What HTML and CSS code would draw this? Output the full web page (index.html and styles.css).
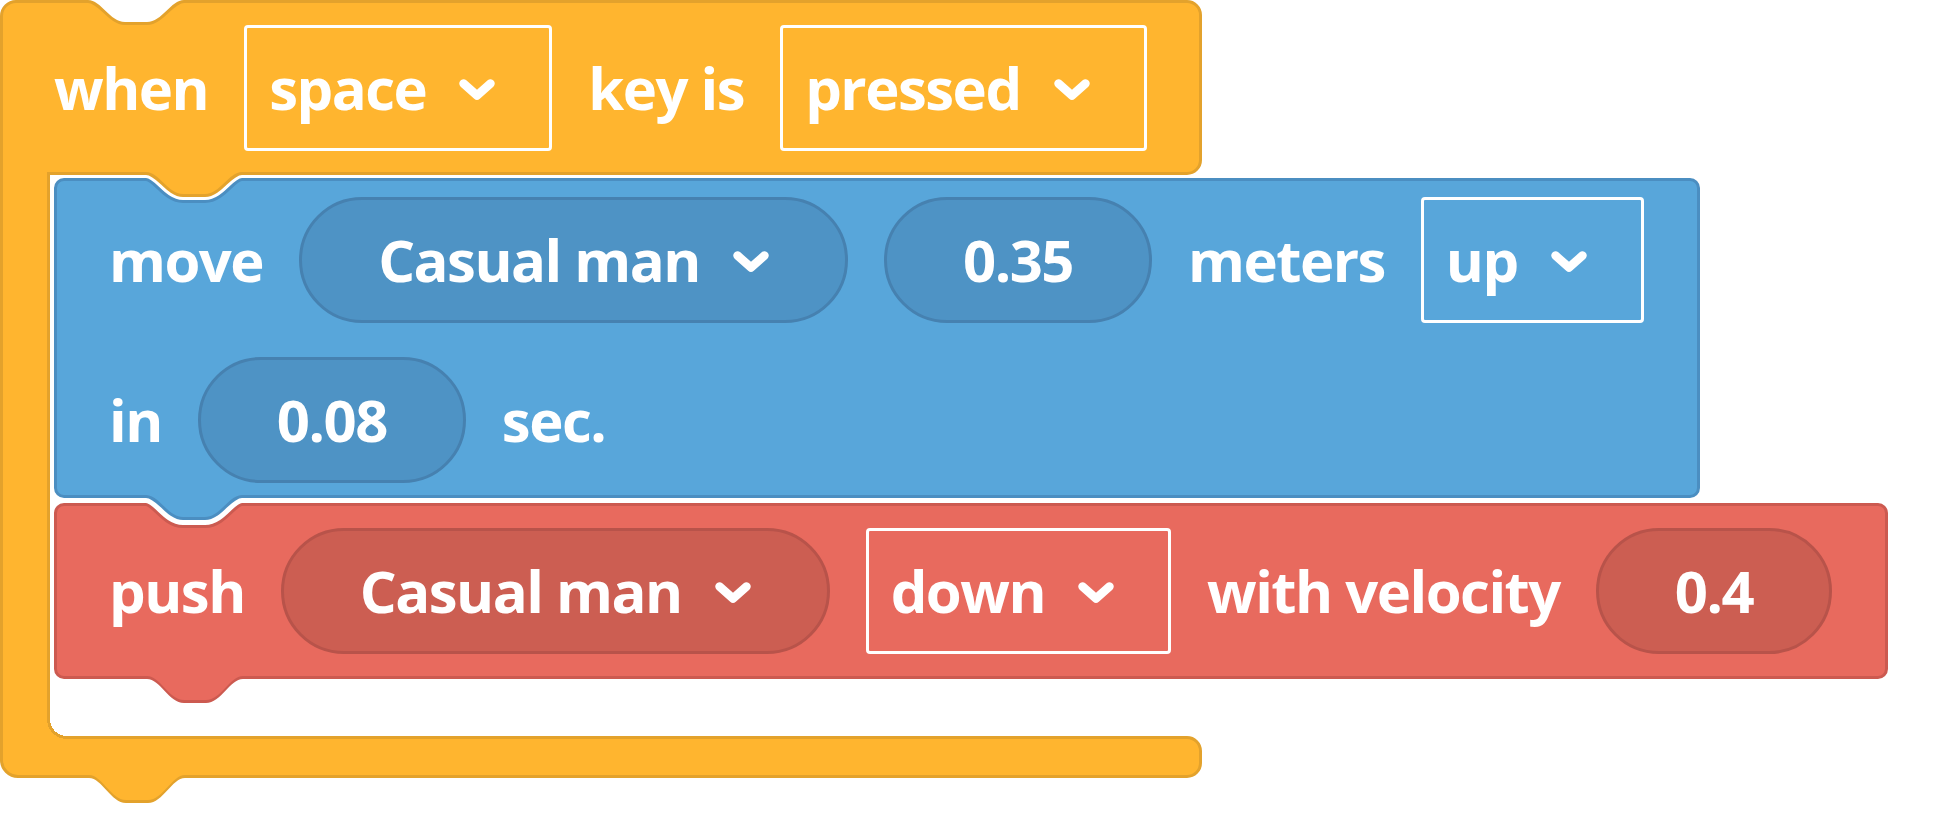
FILE: index.html
```html
<!DOCTYPE html>
<html lang="en">
<head>
    <meta charset="UTF-8">
    <title>when space key is pressed</title>
    <link rel="stylesheet" href="styles.css">
</head>
<body>
    <div class="event">
        <div class="head">
            <!-- notch cut into the top of the hat block -->
            <svg class="notch notch-head" width="120" height="34" viewBox="0 0 120 34">
                <g transform="translate(12,0)">
                    <path d="M-20 0 H0 C13 0 22 22 37 22 H59 C74 22 83 0 96 0 H116" fill="none" stroke="#e3a22c" stroke-width="6"/>
                    <path d="M-20 0 H0 C13 0 22 22 37 22 H59 C74 22 83 0 96 0 H116 V-10 H-20 Z" fill="#fff"/>
                </g>
            </svg>
            <span class="label">when</span>
            <div class="field">
                <span>space</span>
                <svg class="chevron" width="36" height="22" viewBox="0 0 36 22"><path d="M4.5 4.5 L18 16.5 L31.5 4.5"/></svg>
            </div>
            <span class="label">key is</span>
            <div class="field">
                <span>pressed</span>
                <svg class="chevron" width="36" height="22" viewBox="0 0 36 22"><path d="M4.5 4.5 L18 16.5 L31.5 4.5"/></svg>
            </div>
        </div>

        <div class="body">
            <div class="arm"></div>
            <div class="stack">
                <div class="block motion">
                    <!-- tab of the hat block sitting in this block's notch -->
                    <svg class="notch notch-motion" width="120" height="48" viewBox="0 0 120 48">
                        <g transform="translate(12,10)">
                            <path d="M-20 0 H0 C13 0 22 22 37 22 H59 C74 22 83 0 96 0 H116" fill="none" stroke="#4b8ec1" stroke-width="18"/>
                            <path d="M-20 0 H0 C13 0 22 22 37 22 H59 C74 22 83 0 96 0 H116" fill="none" stroke="#fff" stroke-width="12"/>
                            <path d="M-20 0 H0 C13 0 22 22 37 22 H59 C74 22 83 0 96 0 H116" fill="none" stroke="#e3a22c" stroke-width="6"/>
                            <path d="M-20 0 H0 C13 0 22 22 37 22 H59 C74 22 83 0 96 0 H116 V-12 H-20 Z" fill="#ffb52f"/>
                        </g>
                    </svg>
                    <div class="row">
                        <span class="label">move</span>
                        <div class="pill">
                            <span>Casual man</span>
                            <svg class="chevron" width="36" height="22" viewBox="0 0 36 22"><path d="M4.5 4.5 L18 16.5 L31.5 4.5"/></svg>
                        </div>
                        <div class="pill"><span>0.35</span></div>
                        <span class="label">meters</span>
                        <div class="field">
                            <span>up</span>
                            <svg class="chevron" width="36" height="22" viewBox="0 0 36 22"><path d="M4.5 4.5 L18 16.5 L31.5 4.5"/></svg>
                        </div>
                    </div>
                    <div class="row">
                        <span class="label">in</span>
                        <div class="pill"><span>0.08</span></div>
                        <span class="label">sec.</span>
                    </div>
                </div>

                <div class="block physics">
                    <svg class="notch notch-physics" width="120" height="52" viewBox="0 0 120 52">
                        <g transform="translate(12,12)">
                            <path d="M-20 0 H0 C13 0 22 22 37 22 H59 C74 22 83 0 96 0 H116" fill="none" stroke="#cc5a50" stroke-width="22"/>
                            <path d="M-20 0 H0 C13 0 22 22 37 22 H59 C74 22 83 0 96 0 H116" fill="none" stroke="#fff" stroke-width="16"/>
                            <path d="M-20 0 H0 C13 0 22 22 37 22 H59 C74 22 83 0 96 0 H116" fill="none" stroke="#4b8ec1" stroke-width="6"/>
                            <path d="M-20 0 H0 C13 0 22 22 37 22 H59 C74 22 83 0 96 0 H116 V-14 H-20 Z" fill="#58a6da"/>
                        </g>
                    </svg>
                    <div class="row">
                        <span class="label">push</span>
                        <div class="pill">
                            <span>Casual man</span>
                            <svg class="chevron" width="36" height="22" viewBox="0 0 36 22"><path d="M4.5 4.5 L18 16.5 L31.5 4.5"/></svg>
                        </div>
                        <div class="field">
                            <span>down</span>
                            <svg class="chevron" width="36" height="22" viewBox="0 0 36 22"><path d="M4.5 4.5 L18 16.5 L31.5 4.5"/></svg>
                        </div>
                        <span class="label">with velocity</span>
                        <div class="pill"><span>0.4</span></div>
                    </div>
                    <!-- tab hanging under the push block -->
                    <svg class="tab tab-physics" width="120" height="40" viewBox="0 0 120 40">
                        <g transform="translate(12,0)">
                            <path d="M-20 6 H0 C13 6 22 30 37 30 H59 C74 30 83 6 96 6 H116 V0 H-20 Z" fill="#cc5a50"/>
                            <path d="M-20 3 H0 C13 3 22 27 37 27 H59 C74 27 83 3 96 3 H116 V0 H-20 Z" fill="#e86a5e"/>
                        </g>
                    </svg>
                </div>
            </div>
        </div>

        <div class="foot">
            <svg class="tab tab-foot" width="120" height="40" viewBox="0 0 120 40">
                <g transform="translate(12,0)">
                    <path d="M-20 6 H0 C13 6 22 31 37 31 H59 C74 31 83 6 96 6 H116 V0 H-20 Z" fill="#e3a22c"/>
                    <path d="M-20 3 H0 C13 3 22 28 37 28 H59 C74 28 83 3 96 3 H116 V0 H-20 Z" fill="#ffb52f"/>
                </g>
            </svg>
        </div>
    </div>
</body>
</html>
```

FILE: styles.css
```css
* {
    box-sizing: border-box;
}

body {
    margin: 0;
    min-height: 100vh;
    background: #fff;
    font-family: "Open Sans", "Noto Sans", sans-serif;
    font-weight: 700;
    font-size: 58px;
    letter-spacing: -1.5px;
    line-height: 1;
    color: #fff;
}

/* hat block: head, arm and foot make the C shape */
.event {
    display: inline-flex;
    flex-direction: column;
}

.head {
    position: relative;
    display: flex;
    align-items: center;
    gap: 36px;
    padding: 22px 52px 21px 51px;
    background: #ffb52f;
    border: 3px solid #e3a22c;
    border-radius: 16px 15px 15px 0;
}

.body {
    display: flex;
}

.arm {
    position: relative;
    z-index: 1;
    flex: none;
    width: 50px;
    margin: -3px 0;
    background: #ffb52f;
    border-left: 3px solid #e3a22c;
    border-right: 3px solid #e3a22c;
}

/* rounded inner corner at the bottom of the C */
.arm::after {
    content: '';
    position: absolute;
    left: 100%;
    bottom: 0;
    width: 20px;
    height: 20px;
    background: radial-gradient(circle at 100% 0, #fff 0 17px, #e3a22c 17px 20px, #ffb52f 20px);
}

.stack {
    width: 0;
    min-width: 0;
    margin: 3px 0 57px 4px;
    display: flex;
    flex-direction: column;
    gap: 5px;
}

.foot {
    position: relative;
    height: 42px;
    background: #ffb52f;
    border: 3px solid #e3a22c;
    border-radius: 0 15px 15px 18px;
}

/* statement blocks */
.block {
    position: relative;
    width: max-content;
    display: flex;
    flex-direction: column;
    border: 3px solid;
    border-radius: 10px;
    box-shadow: 0 0 0 3px #fff;
}

.motion {
    gap: 34px;
    padding: 16px 53px 12px 52px;
    background: #58a6da;
    border-color: #4b8ec1;
}

.physics {
    padding: 22px 53px 22px 52px;
    background: #e86a5e;
    border-color: #cc5a50;
}

.row {
    display: flex;
    align-items: center;
    gap: 36px;
}

.label {
    white-space: nowrap;
}

/* dropdown with white frame */
.field {
    display: flex;
    align-items: center;
    gap: 33px;
    height: 126px;
    padding: 0 54px 0 22px;
    border: 3px solid #fff;
    border-radius: 4px;
    white-space: nowrap;
}

/* round value / object input */
.pill {
    display: flex;
    align-items: center;
    gap: 33px;
    height: 126px;
    padding: 0 76px;
    border: 3px solid;
    border-radius: 63px;
    white-space: nowrap;
}

.motion .pill {
    background: #4e93c5;
    border-color: #4681b0;
}

.physics .pill {
    background: #cc5e52;
    border-color: #b8534a;
}

.chevron {
    flex: none;
    margin-top: 4px;
}

.chevron path {
    fill: none;
    stroke: #fff;
    stroke-width: 8.5;
    stroke-linecap: round;
    stroke-linejoin: round;
}

/* notches and tabs */
.notch,
.tab {
    position: absolute;
    display: block;
}

.notch-head {
    top: -3px;
    left: 73px;
}

.notch-motion {
    top: -19px;
    left: 77px;
}

.notch-physics {
    top: -23px;
    left: 77px;
}

.tab-physics {
    top: calc(100% - 3px);
    left: 78px;
}

.tab-foot {
    top: calc(100% - 3px);
    left: 74px;
}
```
